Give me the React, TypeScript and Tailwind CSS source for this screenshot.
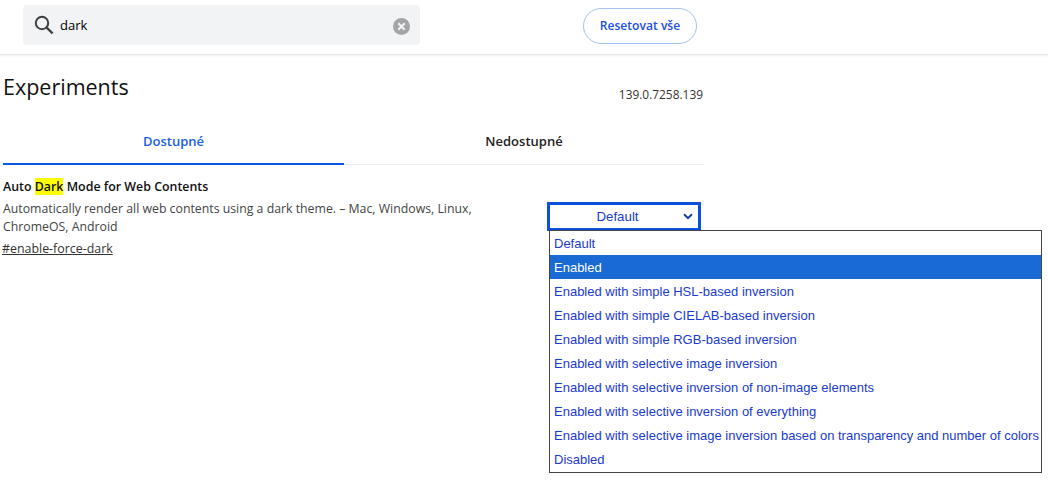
const options = [
  "Default",
  "Enabled",
  "Enabled with simple HSL-based inversion",
  "Enabled with simple CIELAB-based inversion",
  "Enabled with simple RGB-based inversion",
  "Enabled with selective image inversion",
  "Enabled with selective inversion of non-image elements",
  "Enabled with selective inversion of everything",
  "Enabled with selective image inversion based on transparency and number of colors",
  "Disabled",
];

function SearchIcon() {
  return (
    <svg width="20" height="20" viewBox="0 0 20 20" fill="none" stroke="#3c4043" strokeWidth="2">
      <circle cx="8" cy="8" r="6.2" />
      <path d="M12.6 12.6 L18.6 18.4" strokeWidth="2.2" />
    </svg>
  );
}

function ClearIcon() {
  return (
    <svg width="17" height="17" viewBox="0 0 17 17">
      <circle cx="8.5" cy="8.5" r="8.5" fill="#a3a5a8" />
      <path d="M5.3 5.3 L11.7 11.7 M11.7 5.3 L5.3 11.7" stroke="#f1f3f4" strokeWidth="2.2" />
    </svg>
  );
}

export default function App() {
  return (
    <div className="relative w-[1048px] h-[480px] overflow-hidden bg-white font-['Open_Sans',sans-serif]">
      <header className="h-[55px] border-b border-[#e4e5e6] shadow-[0_1px_2px_rgba(0,0,0,0.06)] flex items-start">
        <div className="ml-[23px] mt-[5px] w-[397px] h-[40px] rounded bg-[#f1f3f4] flex items-center pl-[11px] pr-[10px]">
          <SearchIcon />
          <span className="ml-[6px] mt-[1px] text-[13px] text-black">dark</span>
          <span className="ml-auto mt-[2px] flex">
            <ClearIcon />
          </span>
        </div>
        <button className="ml-[163px] mt-[8px] w-[114px] h-[36px] rounded-full border border-[#a3c0f5] text-[12.1px] font-semibold text-[#1a4fe0]">
          Resetovat vše
        </button>
      </header>

      <main className="w-[701px] ml-[3px]">
        <div className="h-[66px] flex justify-between">
          <h1 className="mt-[15px] text-[21.5px] leading-[34px] text-[#111]">Experiments</h1>
          <span className="mt-[30px] mr-[1px] text-[11.9px] leading-[18px] text-[#333]">139.0.7258.139</span>
        </div>

        <div className="flex h-[44px] border-b border-[#eeeeee]">
          <div className="w-[341px] -mb-px border-b-[2px] border-[#0b57e3] pt-[8px] text-center text-[13px] leading-[24px] font-semibold text-[#1a5fe8]">
            Dostupné
          </div>
          <div className="flex-1 pt-[8px] text-center text-[13px] leading-[24px] font-semibold text-[#222]">
            Nedostupné
          </div>
        </div>

        <div className="mt-[13px]">
          <h2 className="text-[12.4px] leading-[18px] font-semibold text-[#111]">
            Auto <mark className="bg-[#ffff00] text-[#111]">Dark</mark> Mode for Web Contents
          </h2>
          <p className="mt-[4px] w-[490px] text-[12.3px] leading-[18px] text-[#444]">
            Automatically render all web contents using a dark theme. – Mac, Windows, Linux, ChromeOS, Android
          </p>
          <a className="-ml-[1px] mt-[4px] block text-[12.4px] leading-[18px] text-[#333] underline">#enable-force-dark</a>
        </div>
      </main>

      <div className="absolute left-[547px] top-[202px] w-[154px] h-[29px] border-[3px] border-[#0b4fdc] bg-white flex items-center justify-center font-['Liberation_Sans',sans-serif] text-[13.3px] text-[#1a3ad0]">
        <span className="-ml-[13px]">Default</span>
        <svg className="absolute right-[5px] top-[8px]" width="10" height="7" viewBox="0 0 10 7" fill="none" stroke="#173f9f" strokeWidth="2">
          <path d="M1 1.2 L5 5.2 L9 1.2" />
        </svg>
      </div>

      <ul className="absolute left-[549px] top-[230px] w-[493px] h-[243px] border border-[#444] bg-white font-['Liberation_Sans',sans-serif] text-[13px] text-[#1a3ad0]">
        {options.map((o) => (
          <li
            key={o}
            className={
              o === "Enabled"
                ? "h-[24px] leading-[25px] pl-[4px] bg-[#1a6ad6] text-white whitespace-nowrap"
                : "h-[24px] leading-[25px] pl-[4px] whitespace-nowrap"
            }
          >
            {o}
          </li>
        ))}
      </ul>
    </div>
  );
}
